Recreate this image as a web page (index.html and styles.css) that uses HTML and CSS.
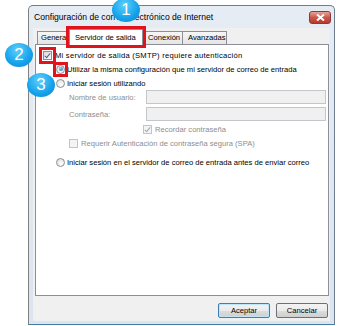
FILE: index.html
```html
<!DOCTYPE html>
<html lang="es">
<head>
    <meta charset="UTF-8">
    <title>Configuración de correo electrónico de Internet</title>
    <link rel="stylesheet" href="styles.css">
</head>
<body>
    <div class="window">
        <div class="titlebar">
            <span class="title">Configuración de correo electrónico de Internet</span>
            <span class="close">
                <svg width="9" height="7" viewBox="0 0 9 7">
                    <path d="M1 0.5 L8 6.5 M8 0.5 L1 6.5" stroke="#fff" stroke-width="2"/>
                </svg>
            </span>
        </div>
        <div class="dialog">
            <div class="tabs">
                <div class="tab">General</div>
                <div class="tab active">Servidor de salida</div>
                <div class="tab">Conexión</div>
                <div class="tab">Avanzadas</div>
            </div>
            <div class="panel">
                <div class="row">
                    <span class="mark wide"><span class="check checked"></span></span>
                    <span class="label smtp">Mi servidor de salida (SMTP) requiere autenticación</span>
                </div>
                <div class="row indent">
                    <span class="mark"><span class="radio selected"></span></span>
                    <span class="label">Utilizar la misma configuración que mi servidor de correo de entrada</span>
                </div>
                <div class="row indent">
                    <span class="radio"></span>
                    <span class="label">Iniciar sesión utilizando</span>
                </div>
                <div class="row field">
                    <span class="field-label">Nombre de usuario:</span>
                    <span class="input"></span>
                </div>
                <div class="row field">
                    <span class="field-label">Contraseña:</span>
                    <span class="input"></span>
                </div>
                <div class="row remember">
                    <span class="check checked disabled"></span>
                    <span class="label muted">Recordar contraseña</span>
                </div>
                <div class="row spa">
                    <span class="check disabled"></span>
                    <span class="label muted">Requerir Autenticación de contraseña segura (SPA)</span>
                </div>
                <div class="row indent last">
                    <span class="radio"></span>
                    <span class="label">Iniciar sesión en el servidor de correo de entrada antes de enviar correo</span>
                </div>
            </div>
            <div class="buttons">
                <span class="button default">Aceptar</span>
                <span class="button">Cancelar</span>
            </div>
        </div>
    </div>

    <span class="badge one">1</span>
    <span class="badge two">2</span>
    <span class="badge three">3</span>
</body>
</html>
```

FILE: styles.css
```css
*{
    margin: 0;
    padding: 0;
    box-sizing: border-box;
}
body{
    background: #ffffff;
    font-family: 'Liberation Sans', Arial, sans-serif;
    font-size: 7.6px;
    color: #000000;
}

.window{
    margin: 5px 0 0 28px;
    width: 307px;
    height: 320px;
    border: 1px solid #6f7c8b;
    border-left-color: #808080;
    border-bottom-color: #3f7fa6;
    border-radius: 5px 5px 0 0;
    background: linear-gradient(#e6ecf4, #dbe4ef);
    padding: 0 4px 3px 4px;
    display: flex;
    flex-direction: column;
}

.titlebar{
    height: 22px;
    display: flex;
    align-items: center;
    justify-content: space-between;
    padding: 0 0 0 1px;
}
.title{
    font-size: 8.6px;
    color: #000000;
}
.close{
    width: 22px;
    height: 13px;
    margin-right: -1px;
    border: 1px solid #8a3a3a;
    border-radius: 3px;
    background: linear-gradient(#e8a49a, #c9584c 50%, #b8392e);
    display: flex;
    align-items: center;
    justify-content: center;
}

.dialog{
    flex: 1;
    background: #f0f0f0;
    padding: 0 1px 0 2px;
    display: flex;
    flex-direction: column;
}

.tabs{
    height: 16px;
    display: flex;
    align-items: flex-end;
    padding-left: 2px;
    position: relative;
    z-index: 1;
    white-space: nowrap;
}
.tab{
    height: 13px;
    padding: 0 2px;
    border: 1px solid #8c8f97;
    border-bottom: none;
    background: linear-gradient(#f6f6f6, #e4e4e4);
    line-height: 12px;
    margin-left: -1px;
}
.tab:first-child{
    width: 34px;
    margin-left: 0;
    padding-left: 3px;
}
.tab.active{
    height: 16px;
    margin: 0 -2px -1px -2px;
    width: 74px;
    padding: 0 5px;
    background: #ffffff;
    line-height: 15px;
    position: relative;
    outline: 3px solid #e0141d;
}
.tab:nth-child(3){
    width: 43px;
    padding-left: 7px;
}
.tab:nth-child(4){
    width: 45px;
    padding-left: 5px;
}

.panel{
    height: 252px;
    background: #ffffff;
    border: 1px solid #8c8f97;
    padding: 3px 0 0 7px;
    display: flex;
    flex-direction: column;
    white-space: nowrap;
}
.row{
    height: 14px;
    display: flex;
    align-items: center;
    gap: 3px;
}
.smtp{
    letter-spacing: 0.25px;
}
.indent{
    padding-left: 13px;
    gap: 2px;
}
.field{
    padding-left: 26px;
}
.field + .field{
    margin-top: 3px;
}
.field-label{
    width: 74px;
    color: #8d8d8d;
}
.input{
    width: 180px;
    height: 14px;
    border: 1px solid #c3c6ca;
    background: #f0f0f0;
}
.remember{
    margin-top: 1px;
    padding-left: 100px;
}
.spa{
    padding-left: 26px;
}
.last{
    margin-top: 5px;
}
.muted{
    color: #8d8d8d;
}

.mark{
    display: flex;
    outline: 3px solid #e0141d;
    position: relative;
    z-index: 1;
}
.mark.wide{
    outline-offset: 1px;
}

.check{
    width: 9px;
    height: 9px;
    border: 1px solid #8e8f8f;
    background: linear-gradient(135deg, #dcdcdc, #fbfbfb);
    position: relative;
    flex: none;
}
.check.checked::after{
    content: "";
    position: absolute;
    left: 2px;
    top: 0px;
    width: 2px;
    height: 5px;
    border: solid #4b61a0;
    border-width: 0 1.5px 1.5px 0;
    transform: rotate(40deg);
}
.check.disabled{
    border-color: #c4c4c4;
    background: #f4f4f4;
}
.check.disabled.checked::after{
    border-color: #a8a8a8;
}

.radio{
    width: 9px;
    height: 9px;
    border-radius: 50%;
    border: 1px solid #8e8f8f;
    background: radial-gradient(circle at 60% 65%, #ffffff, #d6d6d6);
    position: relative;
    flex: none;
}
.radio.selected::after{
    content: "";
    position: absolute;
    left: 1.5px;
    top: 1.5px;
    width: 4px;
    height: 4px;
    border-radius: 50%;
    background: radial-gradient(circle at 40% 35%, #8fd3f7, #1a59a6);
}

.buttons{
    display: flex;
    justify-content: flex-end;
    gap: 6px;
    padding: 7px 1px 0 0;
}
.button{
    width: 52px;
    height: 15px;
    border: 1px solid #707070;
    border-radius: 2px;
    background: linear-gradient(#f3f3f3, #ebebeb 50%, #dddddd 51%, #cfcfcf);
    line-height: 13px;
    text-align: center;
}
.button.default{
    border-color: #3c7fb1;
    box-shadow: inset 0 0 0 1px #bfe6f8;
}

.badge{
    position: absolute;
    width: 28px;
    height: 24px;
    border-radius: 50%;
    background: radial-gradient(circle at 45% 30%, #5fd0fb, #14a1ea 60%, #0b86d0);
    color: #ffffff;
    font-family: 'Liberation Sans', Arial, sans-serif;
    font-size: 17px;
    line-height: 24px;
    text-align: center;
    z-index: 2;
}
.one{
    left: 112px;
    top: -2px;
}
.two{
    left: 5px;
    top: 43px;
}
.three{
    left: 27px;
    top: 73px;
}
```
